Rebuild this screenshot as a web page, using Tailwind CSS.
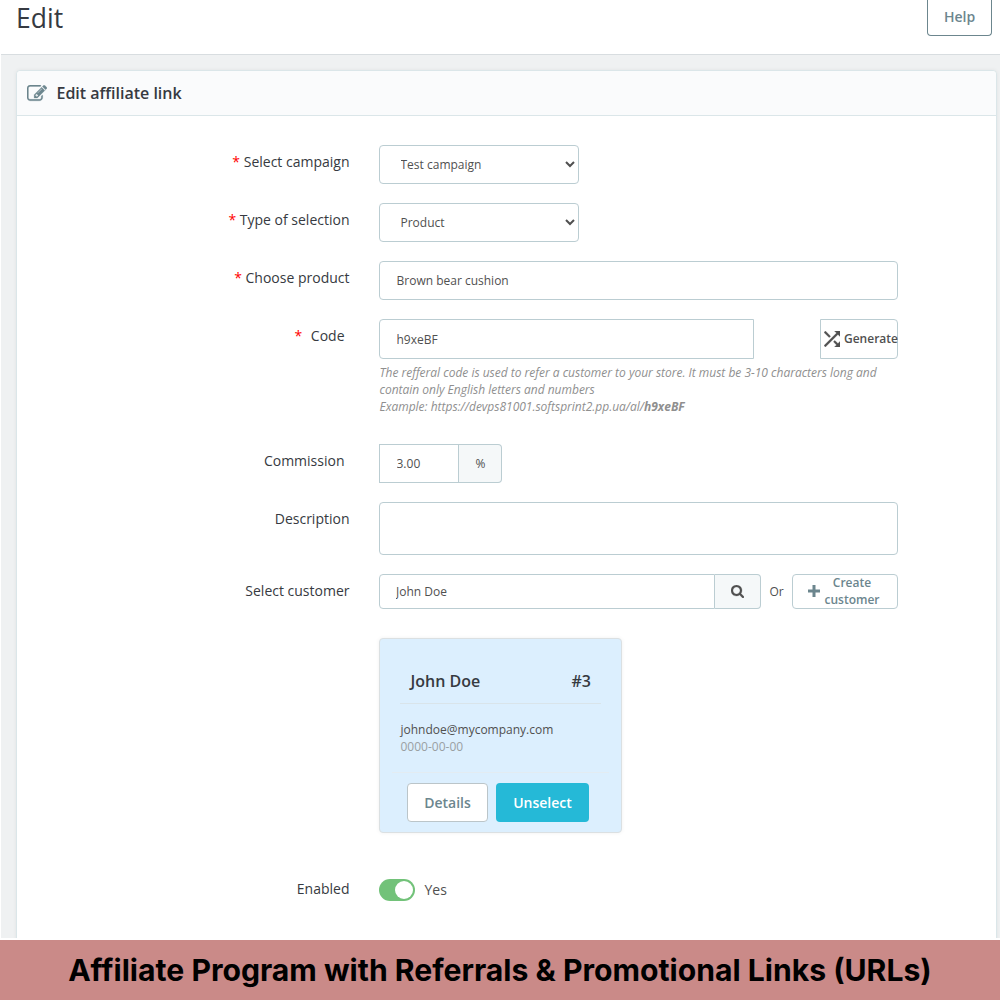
<!DOCTYPE html>
<html lang="en">
<head>
  <meta charset="UTF-8" />
  <meta name="viewport" content="width=device-width, initial-scale=1.0"/>
  <title>Edit affiliate link</title>
  <script src="https://cdn.jsdelivr.net/npm/@tailwindcss/browser@4"></script>
</head>
<body class="bg-white font-['Open_Sans',sans-serif] text-[#363a41]">
  <div class="flex flex-col h-[1000px] overflow-hidden">
    <div class="flex flex-col h-[938px] pl-px overflow-hidden">
      <!-- Page header -->
      <header class="flex items-start justify-between shrink-0 h-[55px] pl-[15px] pr-2 bg-white border-b border-[#d8dde0]">
        <h1 class="text-[26.5px] leading-[37px]">Edit</h1>
        <button class="h-9 w-[65px] rounded-b border border-t-0 border-[#6c868e] text-sm font-semibold text-[#6c868e] pb-0.5">Help</button>
      </header>

      <main class="grow bg-[#eff1f2] pt-[15px] pl-[15px] pr-[3px] overflow-hidden">
        <section class="h-[900px] bg-white rounded border border-[#dbe6e9] shadow-[0_0_4px_0_rgba(0,0,0,0.06)]">
          <div class="flex items-center h-[45px] pl-2.5 bg-[#fafbfc] border-b border-[#dbe6e9] rounded-t">
            <svg class="w-5 h-[18px] mt-0.5" viewBox="0 0 1792 1600" fill="#6c868e" stroke="#6c868e" stroke-width="24"><path d="M888 1056l116-116-152-152-116 116v56h96v96h56zm440-720q-16-16-33 1l-350 350q-17 17-1 33t33-1l350-350q17-17 1-33zm80 594v190q0 119-84.500 203.500t-203.500 84.500h-832q-119 0-203.500-84.500t-84.500-203.500v-832q0-119 84.500-203.500t203.500-84.500h832q63 0 117 25 15 7 18 23 3 17-9 29l-49 49q-14 14-32 8-23-6-45-6h-832q-66 0-113 47t-47 113v832q0 66 47 113t113 47h832q66 0 113-47t47-113v-126q0-13 9-22l64-64q15-15 35-7t20 29zm-96-738l288 288-672 672h-288v-288zm444 132l-92 92-288-288 92-92q28-28 68-28t68 28l152 152q28 28 28 68t-28 68z"/></svg>
            <h2 class="ml-[9.5px] text-base font-semibold tracking-[-0.01px]">Edit affiliate link</h2>
          </div>

          <form class="pt-[29px]">
            <div class="flex gap-[29.5px] mb-[19px]">
              <label class="w-[332.5px] pt-[7px] text-right text-sm"><span class="text-[#f00]">*</span> Select campaign</label>
              <select class="w-[200px] h-[39px] pl-[16.5px] rounded border border-[#bbcdd2] bg-white text-xs text-[#505050]"><option>Test campaign</option></select>
            </div>

            <div class="flex gap-[29.5px] mb-[19px]">
              <label class="w-[332.5px] pt-[7px] text-right text-sm"><span class="text-[#f00]">*</span> Type of selection</label>
              <select class="w-[200px] h-[39px] pl-[16.5px] rounded border border-[#bbcdd2] bg-white text-xs text-[#505050]"><option>Product</option></select>
            </div>

            <div class="flex gap-[29.5px] mb-[19px]">
              <label class="w-[332.5px] pt-[7px] text-right text-sm"><span class="text-[#f00]">*</span> Choose product</label>
              <input type="text" value="Brown bear cushion" class="w-[519px] h-[39px] px-[16.5px] rounded border border-[#bbcdd2] text-xs text-[#505050]" />
            </div>

            <div class="flex gap-[29.5px] mb-[29px]">
              <label class="w-[332.5px] pt-[7px] pr-[5px] text-right text-sm"><span class="text-[#f00] mr-[5px]">*</span> Code</label>
              <div class="w-[519px] h-24">
                <div class="flex justify-between">
                  <input type="text" value="h9xeBF" class="w-[375px] h-10 px-[16.5px] rounded-l border border-[#bbcdd2] text-xs text-[#505050]" />
                  <button type="button" class="flex items-center w-[78px] h-10 pl-[3px] rounded-r border border-[#bbcdd2] text-xs font-semibold text-[#505050]">
                    <svg class="w-4 h-4 shrink-0" viewBox="4 4 16 16" fill="currentColor" stroke="currentColor" stroke-width="0.3"><path d="M10.590 9.170L5.410 4 4 5.410l5.170 5.170 1.420-1.410zM14.500 4l2.040 2.040L4 18.590 5.410 20 17.960 7.460 20 9.500V4h-5.500zm.33 9.410l-1.410 1.410 3.130 3.130L14.500 20H20v-5.500l-2.040 2.040-3.130-3.130z"/></svg>
                    <span class="ml-1">Generate</span>
                  </button>
                </div>
                <p class="mt-[5px] ml-[0.5px] text-xs leading-[17px] italic tracking-[-0.01px] text-[#8f8f8f]">The refferal code is used to refer a customer to your store. It must be 3-10 characters long and contain only English letters and numbers<br>Example: https://devps81001.softsprint2.pp.ua/al/<b>h9xeBF</b></p>
              </div>
            </div>

            <div class="flex gap-[29.5px] mb-[19px]">
              <label class="w-[332.5px] pt-[7px] pr-[5px] text-right text-sm">Commission</label>
              <div class="flex">
                <input type="text" value="3.00" class="w-20 h-[39px] px-[16.5px] border border-[#bbcdd2] text-xs text-[#505050]" />
                <span class="flex items-center justify-center w-[43px] h-[39px] pl-px rounded-r border border-l-0 border-[#bbcdd2] bg-[#f5f8f9] text-xs text-[#505050]">%</span>
              </div>
            </div>

            <div class="flex gap-[29.5px] mb-[19px]">
              <label class="w-[332.5px] pt-[7px] text-right text-sm">Description</label>
              <textarea class="block w-[519px] h-[53px] rounded border border-[#bbcdd2] resize-none"></textarea>
            </div>

            <div class="flex gap-[29.5px] mb-[29px]">
              <label class="w-[332.5px] pt-[7px] text-right text-sm">Select customer</label>
              <div class="flex items-center w-[519px] text-xs text-[#505050]">
                <input type="text" value="John Doe" class="w-[336px] h-[35px] px-4 rounded-l border border-[#bbcdd2]" />
                <button type="button" class="flex items-center justify-center w-[46px] h-[35px] rounded-r border border-l-0 border-[#bbcdd2] bg-[#f5f8f9]">
                  <svg class="w-[13px] h-[13px]" viewBox="0 0 1664 1664" fill="currentColor" stroke="currentColor" stroke-width="30"><path d="M1152 704q0-185-131.500-316.500t-316.500-131.500-316.500 131.500-131.500 316.500 131.500 316.500 316.500 131.500 316.500-131.500 131.500-316.500zm512 832q0 52-38 90t-90 38q-54 0-90-38l-343-342q-179 124-399 124-143 0-273.500-55.500t-225-150-150-225-55.500-273.500 55.500-273.500 150-225 225-150 273.500-55.500 273.500 55.500 225 150 150 225 55.500 273.500q0 220-124 399l343 343q37 37 37 90z"/></svg>
                </button>
                <span class="ml-[8.5px]">Or</span>
                <button type="button" class="flex items-center w-[106px] h-[35px] ml-auto pl-[15px] pb-0.5 rounded border border-[#bbcdd2] font-semibold leading-[17px] text-[#6c868e]">
                  <svg class="w-3 h-3 shrink-0" viewBox="0 0 12 12" fill="currentColor"><path d="M4.500 0h3v4.500H12v3H7.500V12h-3V7.500H0v-3h4.500z"/></svg>
                  <span class="w-16">Create customer</span>
                </button>
              </div>
            </div>

            <!-- Selected customer -->
            <div class="flex flex-col w-[243px] h-[195px] ml-[362px] mb-[46px] px-3 rounded border border-[#dbe0e2] bg-[#dceffe] shadow-[0_0_4px_0_rgba(0,0,0,0.06)]">
              <div class="flex justify-between items-end h-[65px] mx-2 pl-[10.5px] pr-2.5 pb-2.5 border-b border-[#d9e4ea] text-base font-semibold">
                <span>John Doe</span>
                <span>#3</span>
              </div>
              <div class="h-[69px] pt-[17px] px-[8.5px] border-b border-[#e3ecf2] text-xs leading-[17px]">
                <p class="text-[#505050]">johndoe@mycompany.com</p>
                <p class="text-[#9a9fa3]">0000-00-00</p>
              </div>
              <div class="flex justify-center gap-2 pt-2.5 pr-[5px] text-sm font-semibold">
                <button type="button" class="w-[81px] h-[39px] rounded border border-[#bbc5c9] bg-white text-[#6c868e]">Details</button>
                <button type="button" class="w-[93px] h-[39px] rounded bg-[#25b9d7] text-white">Unselect</button>
              </div>
            </div>

            <div class="flex gap-[29.5px]">
              <label class="w-[332.5px] text-right text-sm">Enabled</label>
              <div class="flex items-center gap-[9.5px] text-sm">
                <span class="flex items-center justify-end w-9 h-[22px] pr-0.5 rounded-full bg-[#72c279]"><span class="w-[18px] h-[18px] rounded-full bg-white"></span></span>
                <span class="text-[#505050]">Yes</span>
              </div>
            </div>
          </form>
        </section>
      </main>
    </div>

    <footer class="flex items-center justify-center h-[60px] mt-0.5 pt-0.5 bg-[#ca8a88] font-[Inter,sans-serif] text-[30.150px] font-bold text-black whitespace-nowrap">
      Affiliate Program with Referrals &amp; Promotional Links (URLs)
    </footer>
  </div>
</body>
</html>
